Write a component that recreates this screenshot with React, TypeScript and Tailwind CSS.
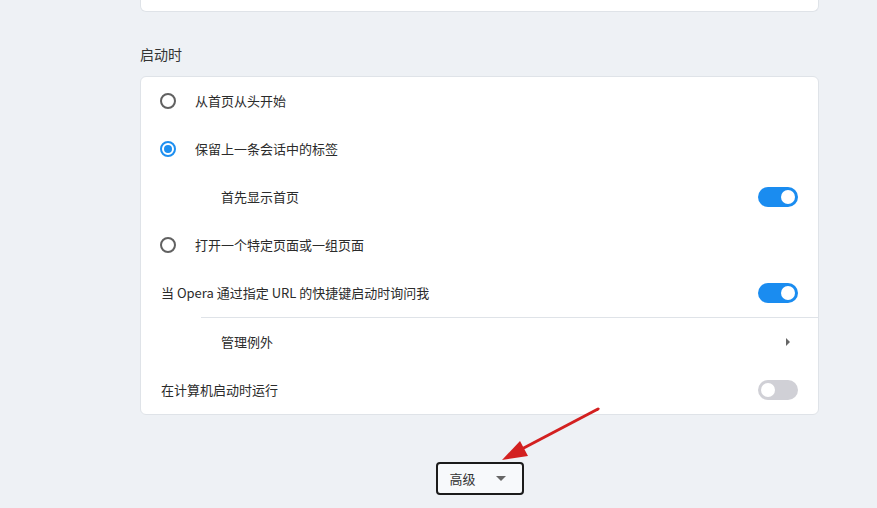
import React from "react";

const font = { fontFamily: '"Noto Sans CJK SC", "Noto Sans", sans-serif' };

function Radio({ checked }: { checked?: boolean }) {
  return (
    <span
      className={`flex h-[16px] w-[16px] items-center justify-center rounded-full border-2 ${
        checked ? "border-[#1d8ff0]" : "border-[#616161]"
      }`}
    >
      {checked && <span className="h-[8px] w-[8px] rounded-full bg-[#1d8ff0]" />}
    </span>
  );
}

function Toggle({ on }: { on?: boolean }) {
  return (
    <span
      className={`flex h-[20px] w-[40px] items-center rounded-full px-[3px] ${
        on ? "justify-end bg-[#1a8cf0]" : "justify-start bg-[#d0d0d6]"
      }`}
    >
      <span className="h-[14px] w-[14px] rounded-full bg-white" />
    </span>
  );
}

function Row({ children, right, className = "" }: { children: React.ReactNode; right?: React.ReactNode; className?: string }) {
  return (
    <div className={`flex h-[48px] items-center justify-between pr-[20px] ${className}`}>
      <div className="flex items-center">{children}</div>
      {right}
    </div>
  );
}

export default function App() {
  return (
    <div className="relative h-[508px] w-[877px] overflow-hidden bg-[#eef1f5] text-[13px] text-[#2b2b2b]" style={font}>
      <div className="ml-[140px] w-[679px]">
        {/* previous card bottom */}
        <div className="mt-[-20px] h-[32px] rounded-b-[6px] border border-t-0 border-[#dfe3e8] bg-white" />

        <div className="mt-[33px] mb-[13px] h-[18px] leading-[18px] text-[14px] text-[#333]">启动时</div>

        <div className="rounded-[6px] border border-[#dfe3e8] bg-white">
          <Row className="pl-[19px]">
            <Radio />
            <span className="ml-[19px]">从首页从头开始</span>
          </Row>
          <Row className="pl-[19px]">
            <Radio checked />
            <span className="ml-[19px]">保留上一条会话中的标签</span>
          </Row>
          <Row className="pl-[80px]" right={<Toggle on />}>
            <span>首先显示首页</span>
          </Row>
          <Row className="pl-[19px]">
            <Radio />
            <span className="ml-[19px]">打开一个特定页面或一组页面</span>
          </Row>
          <Row className="pl-[20px]" right={<Toggle on />}>
            <span>当 Opera 通过指定 URL 的快捷键启动时询问我</span>
          </Row>
          <div className="ml-[60px] border-t border-[#dfe3e8]" />
          <Row className="pl-[80px]" right={
            <svg width="6" height="10" viewBox="0 0 6 10" className="mr-[7px]">
              <path d="M1 1 L5 5 L1 9 Z" fill="#666" />
            </svg>
          }>
            <span>管理例外</span>
          </Row>
          <Row className="pl-[20px]" right={<Toggle />}>
            <span>在计算机启动时运行</span>
          </Row>
        </div>

        <div className="mt-[47px] flex justify-center">
          <button className="flex h-[33px] w-[88px] items-center rounded-[4px] border-2 border-[#1b1b1b] bg-[#f7f9fb] pl-[12px] text-[13px] text-[#333]">
            <span>高级</span>
            <svg width="10" height="6" viewBox="0 0 10 6" className="ml-[20px]">
              <path d="M0 0 L10 0 L5 5 Z" fill="#666" />
            </svg>
          </button>
        </div>
      </div>

      {/* annotation arrow */}
      <svg className="absolute left-0 top-0" width="877" height="508" viewBox="0 0 877 508">
        <line x1="598" y1="409" x2="518" y2="451" stroke="#d32020" strokeWidth="3" strokeLinecap="round" />
        <path d="M502 460 L520 441 L528 456 Z" fill="#d32020" />
      </svg>
    </div>
  );
}
